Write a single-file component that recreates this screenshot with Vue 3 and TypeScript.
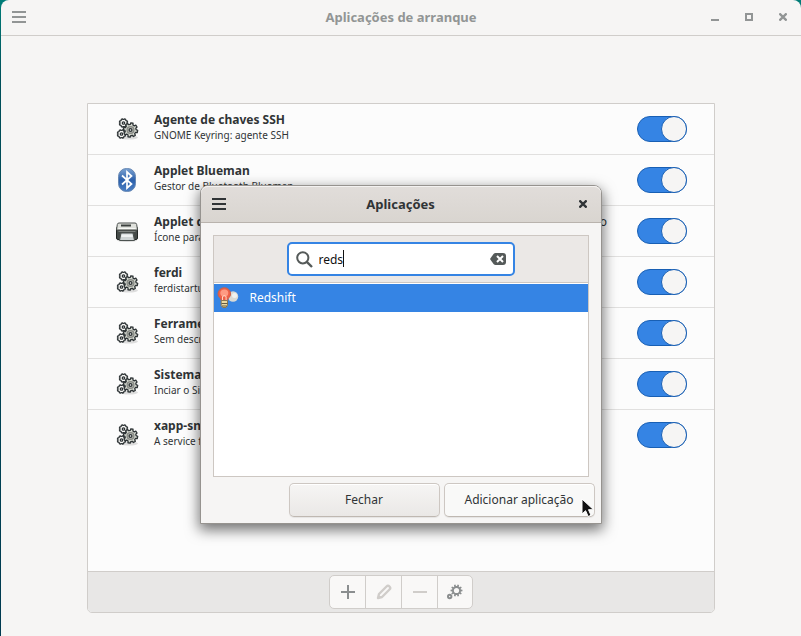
<script setup lang="ts">
import { ref } from 'vue'

type IconName = 'gears' | 'bluetooth' | 'printer'

interface StartupItem {
  name: string
  description: string
  icon: IconName
  enabled: boolean
  note?: string
}

const items = ref<StartupItem[]>([
  { name: 'Agente de chaves SSH', description: 'GNOME Keyring: agente SSH', icon: 'gears', enabled: true },
  { name: 'Applet Blueman', description: 'Gestor de Bluetooth Blueman', icon: 'bluetooth', enabled: true },
  { name: 'Applet da fila de impressão', description: 'Ícone para trabalhos de impressão', icon: 'printer', enabled: true, note: 'Atraso' },
  { name: 'ferdi', description: 'ferdistartup', icon: 'gears', enabled: true },
  { name: 'Ferramentas', description: 'Sem descrição', icon: 'gears', enabled: true },
  { name: 'Sistema de som', description: 'Inciar o Sistema de som', icon: 'gears', enabled: true },
  { name: 'xapp-sn-watcher', description: 'A service for status icons', icon: 'gears', enabled: true },
])

const query = ref('reds')

/** Outline of a cog with trapezoid teeth. */
function cog(cx: number, cy: number, outer: number, inner: number, teeth: number, turn = 0): string {
  const step = (Math.PI * 2) / teeth
  const points: string[] = []
  for (let i = 0; i < teeth; i++) {
    const base = i * step + turn
    const corners: [number, number][] = [
      [inner, -0.32], [outer, -0.2], [outer, 0.2], [inner, 0.32],
    ]
    for (const [r, k] of corners) {
      const a = base + k * step
      points.push(`${(cx + r * Math.cos(a)).toFixed(2)} ${(cy + r * Math.sin(a)).toFixed(2)}`)
    }
  }
  return `M${points.join('L')}Z`
}

const bigCog = cog(15.5, 13, 7.2, 5.6, 8, 0.2)
const topCog = cog(8.5, 6, 4.2, 3.6, 8, 0.39)
const lowCog = cog(6.5, 17, 4.2, 3.6, 8, 0.39)
const prefsCog = cog(9.5, 6.5, 6, 4.5, 10)
</script>

<template>
  <div class="desktop">
    <div class="window">
      <header class="titlebar">
        <button class="bar-button" aria-label="Menu">
          <svg width="14" height="12" viewBox="0 0 14 12"><path d="M0 0h14v2H0zM0 5h14v2H0zM0 10h14v2H0z" fill="currentColor" /></svg>
        </button>
        <h1>Aplicações de arranque</h1>
        <div class="window-controls">
          <button class="bar-button" aria-label="Minimizar">
            <svg width="8" height="8" viewBox="0 0 8 8"><path d="M0 6h8v2H0z" fill="currentColor" /></svg>
          </button>
          <button class="bar-button" aria-label="Maximizar">
            <svg width="8" height="8" viewBox="0 0 8 8"><path d="M1 1h6v6H1z" fill="none" stroke="currentColor" stroke-width="2" /></svg>
          </button>
          <button class="bar-button" aria-label="Fechar janela">
            <svg width="8" height="8" viewBox="0 0 8 8"><path d="M.4.4l7.2 7.2M7.600.4L.4 7.600" stroke="currentColor" stroke-width="2.300" /></svg>
          </button>
        </div>
      </header>

      <main class="content">
        <section class="panel">
          <ul class="list">
            <li v-for="item in items" :key="item.name" class="row">
              <svg v-if="item.icon === 'gears'" class="app-icon" viewBox="0 0 24 24">
                <ellipse cx="14" cy="20.500" rx="9" ry="2" fill="#000" opacity=".12" />
                <g stroke="#2e3436" stroke-width="1.300" stroke-linejoin="round">
                  <path :d="topCog" fill="#f4f4f2" />
                  <path :d="lowCog" fill="#f4f4f2" />
                  <path :d="bigCog" fill="#d3d7cf" />
                  <circle cx="15.500" cy="13" r="3.400" fill="#b4b7b0" stroke="#888a85" />
                  <circle cx="15.500" cy="13" r="1.400" fill="#fff" />
                  <circle cx="8.500" cy="6" r="1.200" fill="#fff" />
                  <circle cx="6.500" cy="17" r="1.200" fill="#fff" />
                </g>
              </svg>
              <svg v-else-if="item.icon === 'bluetooth'" class="app-icon" viewBox="0 0 24 24">
                <defs>
                  <linearGradient id="blue" x1="0" y1="0" x2="0" y2="1">
                    <stop offset="0" stop-color="#7ba2d2" />
                    <stop offset=".5" stop-color="#2c60ab" />
                    <stop offset="1" stop-color="#4b7fc4" />
                  </linearGradient>
                </defs>
                <rect x="3.500" y=".5" width="17" height="23" rx="8" fill="url(#blue)" stroke="#6687b3" />
                <path d="M7 7.500l9.500 8.500-4.500 4V4l4.500 4L7 16.500" fill="none" stroke="#fff" stroke-width="1.700" />
              </svg>
              <svg v-else class="app-icon" viewBox="0 0 24 24">
                <ellipse cx="12" cy="21.500" rx="10" ry="1.500" fill="#000" opacity=".15" />
                <rect x="1.500" y="8" width="21" height="12.500" rx="1.500" fill="#454b49" stroke="#202523" />
                <path d="M4 4h16q1.500 0 1.700 1.500L22.500 11h-21l.8-5.500Q2.500 4 4 4z" fill="#dfe1dc" stroke="#4c514f" />
                <path d="M6 6.500h10" stroke="#3c413f" stroke-width="2" />
                <path d="M3.500 9.500h17" stroke="#f7f8f6" />
                <path d="M3.500 12.500h17" stroke="#7d827f" />
                <path d="M6 14h12l1.500 7.500h-15z" fill="#cdd3d4" stroke="#4c5250" />
                <path d="M6.700 15.500h10.600l.5 2.500H6.200z" fill="#eef1f1" />
              </svg>
              <div class="row-text">
                <strong>{{ item.name }}</strong>
                <span>{{ item.description }}</span>
              </div>
              <span v-if="item.note" class="note">{{ item.note }}</span>
              <input v-model="item.enabled" class="switch" type="checkbox" role="switch" :aria-label="item.name" />
            </li>
          </ul>

          <footer class="toolbar">
            <div class="button-group">
              <button aria-label="Adicionar">
                <svg width="16" height="16" viewBox="0 0 16 16"><path d="M1 8h14M8 1v14" stroke="#8b8e8f" stroke-width="2" /></svg>
              </button>
              <button aria-label="Editar" disabled>
                <svg width="16" height="16" viewBox="0 0 16 16"><path d="M2 14l1-4 7.500-7.500a2.100 2.100 0 0 1 3 3L6 13z" fill="none" stroke="#d0cdca" stroke-width="2.400" stroke-linejoin="round" /></svg>
              </button>
              <button aria-label="Remover" disabled>
                <svg width="16" height="16" viewBox="0 0 16 16"><path d="M1 8h14" stroke="#d0cdca" stroke-width="2" /></svg>
              </button>
              <button aria-label="Executar">
                <svg width="16" height="16" viewBox="0 0 16 16">
                  <path :d="prefsCog" fill="#8b8e8f" />
                  <circle cx="9.500" cy="6.500" r="2.600" fill="#f9f8f7" />
                  <circle cx="2.700" cy="12.500" r="1.700" fill="#f9f8f7" stroke="#8b8e8f" stroke-width="2" />
                </svg>
              </button>
            </div>
          </footer>
        </section>
      </main>
    </div>

    <div class="overlay">
      <div class="dialog" role="dialog" aria-labelledby="dialog-title">
        <header class="dialog-bar">
          <button class="bar-button" aria-label="Menu da caixa">
            <svg width="14" height="12" viewBox="0 0 14 12"><path d="M0 0h14v2H0zM0 5h14v2H0zM0 10h14v2H0z" fill="currentColor" /></svg>
          </button>
          <h2 id="dialog-title">Aplicações</h2>
          <div class="window-controls">
            <button class="bar-button" aria-label="Fechar caixa">
              <svg width="8" height="8" viewBox="0 0 8 8"><path d="M.4.4l7.200 7.200M7.600.4L.4 7.600" stroke="currentColor" stroke-width="2.300" /></svg>
            </button>
          </div>
        </header>

        <div class="dialog-body">
          <div class="chooser">
            <div class="search-bar">
              <div class="search">
                <svg width="17" height="17" viewBox="0 0 17 17"><circle cx="6.800" cy="6.800" r="5.600" fill="none" stroke="#555a59" stroke-width="2" /><path d="M10.800 10.800L16 16" stroke="#555a59" stroke-width="2.400" /></svg>
                <div class="field">
                  <input v-model="query" type="text" aria-label="Procurar" />
                  <span class="caret" aria-hidden="true">{{ query }}</span>
                </div>
                <button class="clear" aria-label="Limpar" @click="query = ''">
                  <svg width="16" height="12" viewBox="0 0 16 12"><path d="M5.500 0H13a3 3 0 0 1 3 3v6a3 3 0 0 1-3 3H5.500Q4.500 12 3.500 11L0 6l3.500-5Q4.500 0 5.500 0z" fill="#555a59" /><path d="M7 3l6 6M13 3L7 9" stroke="#fff" stroke-width="2" /></svg>
                </button>
              </div>
            </div>
            <ul class="results">
              <li>
                <svg width="22" height="22" viewBox="0 0 22 22">
                  <circle cx="16" cy="9.500" r="5.200" fill="#d9dad5" />
                  <circle cx="17.500" cy="8.500" r="2.500" fill="#f0f1ee" />
                  <path d="M1 7a6.300 6.300 0 1 1 12.600 0c0 3-2.800 3.800-3 6.500H4.200C4 10.800 1 10 1 7z" fill="#ef6048" stroke="#c9624a" />
                  <ellipse cx="7.300" cy="6" rx="4" ry="3.600" fill="#ff9b83" />
                  <path d="M5.500 13V9.500l1.800-1 1.800 1V13" fill="none" stroke="#ffd7c2" />
                  <path d="M4.200 13.500h6.300v5l-1.500 2H5.800l-1.600-2z" fill="#e9d9a2" stroke="#8a7951" />
                  <path d="M4.500 16.500h6M5 19h5" stroke="#665c43" />
                </svg>
                <span>Redshift</span>
              </li>
            </ul>
          </div>
          <div class="actions">
            <button>Fechar</button>
            <button class="hovered">
              Adicionar aplicação
              <svg class="pointer" width="14" height="20" viewBox="0 0 14 20" aria-hidden="true"><path d="M1 1v15l3.600-3.300L7.200 18.500l2.800-1.200-2.500-5.600H12.500z" fill="#111" stroke="#fff" /></svg>
            </button>
          </div>
        </div>
      </div>
    </div>
  </div>
</template>

<style>
body {
  margin: 0;
}
</style>

<style scoped>
* {
  box-sizing: border-box;
}

.desktop {
  position: relative;
  display: flex;
  min-height: 100vh;
  padding-left: 1px;
  background: linear-gradient(#007d78, #00505a 80px, #003a50);
  color: #303436;
  font: 12px/16px "Noto Sans", sans-serif;
}

button,
input {
  margin: 0;
  padding: 0;
  font: inherit;
  color: inherit;
}

svg {
  display: block;
  flex: none;
}

h1,
h2 {
  margin: 0;
  font-size: 13px;
  line-height: 20px;
  font-weight: 700;
  text-align: center;
}

ul {
  margin: 0;
  padding: 0;
  list-style: none;
}

.window {
  flex: 1;
  display: flex;
  flex-direction: column;
  border-radius: 8px 8px 0 0;
  background: #f6f5f4;
}

.titlebar,
.dialog-bar {
  display: grid;
  grid-template-columns: 1fr auto 1fr;
  align-items: center;
  padding: 0 11px;
}

.titlebar {
  height: 36px;
  padding-bottom: 1px;
  border-bottom: 1px solid #d0cdca;
  color: #929595;
}

.bar-button {
  justify-self: start;
  border: 0;
  background: none;
}

.window-controls {
  display: flex;
  justify-self: end;
  gap: 26px;
  margin-right: 3px;
}

.content {
  flex: 1;
  display: flex;
  padding: 67px 86px 23px;
}

.panel {
  flex: 1;
  display: flex;
  flex-direction: column;
  border: 1px solid #d0cdca;
  border-radius: 0 0 5px 5px;
  background: #fcfcfc;
}

.list {
  flex: 1;
}

.row {
  display: flex;
  align-items: center;
  height: 51px;
  padding: 0 27px;
  border-bottom: 1px solid #e1e0df;
}

.row:last-child {
  border-bottom-color: transparent;
}

.app-icon {
  width: 24px;
  height: 24px;
}

.row-text {
  flex: 1;
  display: flex;
  flex-direction: column;
  margin-left: 15px;
  padding-bottom: 4px;
}

.row-text strong {
  font-weight: 700;
}

.row-text span {
  font-size: 10px;
  line-height: 14px;
}

.note {
  align-self: flex-start;
  margin: 8px 30px 0 0;
}

.switch {
  appearance: none;
  display: flex;
  width: 50px;
  height: 26px;
  border: 1px solid #185fb4;
  border-radius: 13px;
  background: #3584e4;
}

.switch::before {
  content: "";
  box-sizing: border-box;
  width: 26px;
  height: 26px;
  margin: -1px;
  border: 1px solid #185fb4;
  border-radius: 50%;
  background: #f6f5f4;
}

.switch:checked {
  justify-content: flex-end;
}

.switch:not(:checked) {
  background: #d8d4d0;
}

.toolbar {
  display: flex;
  justify-content: center;
  padding: 3px;
  border-top: 1px solid #d0cdca;
  border-radius: 0 0 4px 4px;
  background: #e8e7e6;
}

.button-group {
  display: flex;
  border: 1px solid #d0cdca;
  border-radius: 5px;
  background: #f9f8f7;
}

.button-group button {
  display: grid;
  place-items: center;
  width: 36px;
  height: 32px;
  border: 0;
  border-right: 1px solid #d0cdca;
  background: none;
}

.button-group button:last-child {
  width: 34px;
  border-right: 0;
}

.overlay {
  position: absolute;
  inset: 0;
  display: flex;
  justify-content: center;
  align-items: flex-start;
  padding-top: 185px;
}

.dialog {
  width: 50%;
  min-width: 402px;
  border: 1px solid #96938f;
  border-radius: 8px 8px 0 0;
  background: #f6f5f4;
  box-shadow: 0 5px 14px 1px rgba(0, 0, 0, 0.55);
}

.dialog-bar {
  height: 37px;
  border-bottom: 1px solid #b9b3ad;
  border-radius: 7px 7px 0 0;
  background: linear-gradient(#e1ddda, #d9d5d0);
  box-shadow: inset 0 1px #f4f2f1;
}

.dialog-body {
  padding: 12px 6px 6px 12px;
}

.chooser {
  height: 242px;
  margin-right: 6px;
  border: 1px solid #cdc7c2;
  background: #fff;
}

.search-bar {
  display: flex;
  justify-content: center;
  padding: 6px 0;
  border-bottom: 1px solid #cdc7c2;
  background: #ebe8e6;
}

.search {
  display: flex;
  align-items: center;
  width: 228px;
  height: 34px;
  padding: 0 7px;
  border: 2px solid #3584e4;
  border-radius: 5px;
  background: #fff;
  color: #111;
}

.field {
  position: relative;
  flex: 1;
  margin-left: 6px;
}

.field input {
  display: block;
  width: 100%;
  height: 18px;
  border: 0;
  outline: 0;
  background: none;
  caret-color: transparent;
}

.caret {
  position: absolute;
  top: 0;
  left: 0;
  height: 17px;
  border-right: 1px solid #111;
  color: transparent;
  pointer-events: none;
}

.clear {
  border: 0;
  background: none;
}

.results {
  padding-top: 1px;
}

.results li {
  display: flex;
  align-items: center;
  gap: 11px;
  height: 28px;
  padding-left: 3px;
  background: #3584e4;
  color: #fff;
}

.actions {
  display: flex;
  justify-content: flex-end;
  gap: 4px;
  margin-top: 6px;
}

.actions button {
  position: relative;
  width: 151px;
  height: 34px;
  border: 1px solid #cdc7c2;
  border-bottom-color: #bfb8b1;
  border-radius: 5px;
  background: linear-gradient(#f6f5f4, #eae8e6);
  box-shadow: inset 0 1px #fff, 0 1px 1px rgba(0, 0, 0, 0.07);
}

.actions .hovered {
  background: #f9f9f8;
}

.pointer {
  position: absolute;
  right: -1px;
  bottom: -2px;
}
</style>
